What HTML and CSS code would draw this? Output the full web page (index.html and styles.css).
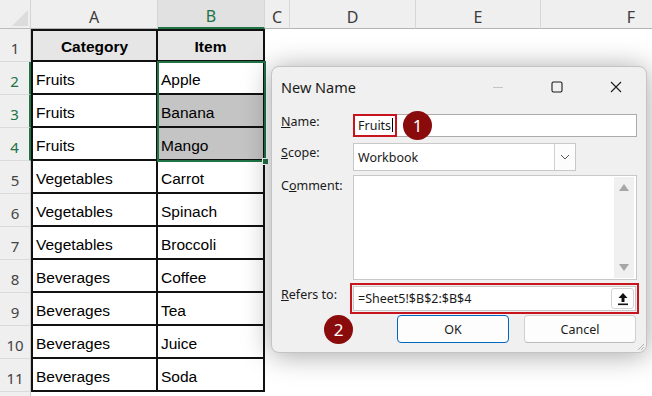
FILE: index.html
```html
<!DOCTYPE html>
<html lang="en">
  <head>
    <meta charset="utf-8">
    <title>New Name</title>
    <link rel="stylesheet" href="styles.css">
  </head>
  <body>
    <div class="sheet">
      <div class="corner"><span class="tri"></span></div>
      <div class="colhead">A</div>
      <div class="colhead on">B</div>
      <div class="colhead">C</div>
      <div class="colhead">D</div>
      <div class="colhead">E</div>
      <div class="colhead last">F</div>

      <div class="rowhead">1</div>
      <div class="cell head first">Category</div>
      <div class="cell head">Item</div>
      <div class="blank"></div>

      <div class="rowhead on">2</div>
      <div class="cell first">Fruits</div>
      <div class="cell">Apple</div>
      <div class="blank"></div>

      <div class="rowhead on">3</div>
      <div class="cell first">Fruits</div>
      <div class="cell sel">Banana</div>
      <div class="blank"></div>

      <div class="rowhead on">4</div>
      <div class="cell first">Fruits</div>
      <div class="cell sel">Mango</div>
      <div class="blank"></div>

      <div class="rowhead">5</div>
      <div class="cell first">Vegetables</div>
      <div class="cell">Carrot</div>
      <div class="blank"></div>

      <div class="rowhead">6</div>
      <div class="cell first">Vegetables</div>
      <div class="cell">Spinach</div>
      <div class="blank"></div>

      <div class="rowhead">7</div>
      <div class="cell first">Vegetables</div>
      <div class="cell">Broccoli</div>
      <div class="blank"></div>

      <div class="rowhead">8</div>
      <div class="cell first">Beverages</div>
      <div class="cell">Coffee</div>
      <div class="blank"></div>

      <div class="rowhead">9</div>
      <div class="cell first">Beverages</div>
      <div class="cell">Tea</div>
      <div class="blank"></div>

      <div class="rowhead">10</div>
      <div class="cell first">Beverages</div>
      <div class="cell">Juice</div>
      <div class="blank"></div>

      <div class="rowhead">11</div>
      <div class="cell first">Beverages</div>
      <div class="cell">Soda</div>
      <div class="blank"></div>

      <div class="rowhead"></div>
      <div class="blank tail"></div>

      <div class="selection"><span class="handle"></span></div>
    </div>

    <div class="dialog">
      <div class="titlebar">
        <span class="title">New Name</span>
        <span class="caption">
          <span class="capbtn">
            <svg width="12" height="12" viewBox="0 0 12 12"><path d="M1 6.5h10" stroke="#c4c4c4" stroke-width="1"/></svg>
          </span>
          <span class="capbtn">
            <svg width="12" height="12" viewBox="0 0 12 12"><rect x="1" y="1" width="10" height="10" rx="1.5" fill="none" stroke="#1a1a1a" stroke-width="1.1"/></svg>
          </span>
          <span class="capbtn">
            <svg width="12" height="12" viewBox="0 0 12 12"><path d="M1 1l10 10M11 1L1 11" stroke="#1a1a1a" stroke-width="1.1"/></svg>
          </span>
        </span>
      </div>

      <div class="form">
        <div class="row r-name">
          <label class="lbl"><u>N</u>ame:</label>
          <div class="field name"><span class="mark">Fruits</span></div>
        </div>
        <div class="row r-scope">
          <label class="lbl"><u>S</u>cope:</label>
          <div class="field scope">
            <span class="val">Workbook</span>
            <span class="drop">
              <svg width="10" height="6" viewBox="0 0 10 6"><path d="M1 1l4 4 4-4" fill="none" stroke="#555" stroke-width="1"/></svg>
            </span>
          </div>
        </div>
        <div class="row r-comment">
          <label class="lbl">C<u>o</u>mment:</label>
          <div class="field comment">
            <div class="scroll">
              <svg width="10" height="7" viewBox="0 0 10 7"><path d="M0 7L5 0l5 7z" fill="#a6a6a6"/></svg>
              <svg width="10" height="7" viewBox="0 0 10 7"><path d="M0 0l5 7 5-7z" fill="#a6a6a6"/></svg>
            </div>
          </div>
        </div>
        <div class="row r-refers">
          <label class="lbl"><u>R</u>efers to:</label>
          <div class="field refers">
            <span class="val">=Sheet5!$B$2:$B$4</span>
            <span class="pick">
              <svg width="12" height="14" viewBox="0 0 12 14"><path d="M6 1L1.5 6H4.5V10H7.5V6H10.5z" fill="#111"/><rect x="1" y="11.5" width="10" height="1.6" fill="#111"/></svg>
            </span>
          </div>
        </div>
        <div class="row r-buttons">
          <button class="btn primary">OK</button>
          <button class="btn">Cancel</button>
        </div>
      </div>

      <svg class="grip" width="10" height="10" viewBox="0 0 10 10"><path d="M9 3L3 9M9 6L6 9" stroke="#b0b0b0" stroke-width="1"/></svg>
    </div>

    <span class="badge b1">1</span>
    <span class="badge b2">2</span>
  </body>
</html>
```

FILE: styles.css
```css
html, body {
  margin: 0;
  padding: 0;
}

body {
  width: 652px;
  height: 396px;
  overflow: hidden;
  background: #fff;
  position: relative;
  font-family: "Liberation Sans", Arial, sans-serif;
}

/* spreadsheet */

.sheet {
  position: relative;
  display: grid;
  grid-template-columns: 31px 127px 107px 25px 126px 125px 111px;
  grid-template-rows: 29px repeat(11, 33px) 1fr;
  height: 396px;
}

.corner {
  background: #efefef;
  border-bottom: 1px solid #bdbdbd;
  border-right: 1px solid #d4d4d4;
  box-sizing: border-box;
  position: relative;
}

.corner .tri {
  position: absolute;
  right: 2px;
  bottom: 2px;
  width: 0;
  height: 0;
  border-left: 16px solid transparent;
  border-bottom: 16px solid #dcdcdc;
}

.colhead {
  background: #efefef;
  border-bottom: 1px solid #b4b4b4;
  border-right: 1px solid #d6d6d6;
  box-sizing: border-box;
  display: flex;
  justify-content: center;
  align-items: center;
  padding-top: 5px;
  font-family: "Noto Sans", "Open Sans", sans-serif;
  font-size: 16px;
  color: #3c3c3c;
}

.colhead.on {
  background: #e1e1e1;
  color: #217346;
  border-bottom: 2px solid #217346;
}

.colhead.last {
  justify-content: flex-end;
  padding-right: 17px;
  border-right: none;
}

.rowhead {
  background: #efefef;
  border-bottom: 1px solid #dadada;
  border-right: 1px solid #c8c8c8;
  box-sizing: border-box;
  display: flex;
  justify-content: center;
  align-items: center;
  padding-top: 5px;
  font-family: "Noto Sans", "Open Sans", sans-serif;
  font-size: 15px;
  color: #444;
}

.rowhead.on {
  color: #217346;
  border-right: 2px solid #217346;
}

.cell {
  border-right: 2px solid #111;
  border-bottom: 2px solid #111;
  box-sizing: border-box;
  display: flex;
  align-items: center;
  padding: 5px 0 0 3px;
  font-size: 15.5px;
  color: #000;
}

.cell.first {
  border-left: 2px solid #111;
}

.cell.head {
  background: #e6e6e6;
  border-top: 2px solid #111;
  justify-content: center;
  font-weight: bold;
  padding-left: 0;
  padding-top: 3px;
}

.cell.sel {
  background: #c4c4c4;
}

.blank {
  grid-column: span 4;
  background: #fff;
}

.blank.tail {
  grid-column: span 6;
}

.selection {
  position: absolute;
  left: 157px;
  top: 61px;
  width: 109px;
  height: 101px;
  box-sizing: border-box;
  border: 2px solid #217346;
}

.selection .handle {
  position: absolute;
  right: -5px;
  bottom: -5px;
  width: 5px;
  height: 5px;
  background: #217346;
  border: 1px solid #fff;
}

/* dialog */

.dialog {
  position: absolute;
  left: 271px;
  top: 66px;
  width: 376px;
  height: 287px;
  box-sizing: border-box;
  background: #f0f0f0;
  border: 1px solid #c4c4c4;
  border-radius: 8px;
  box-shadow: 0 2px 28px rgba(0, 0, 0, 0.36);
  font-family: "Noto Sans", "Open Sans", sans-serif;
  font-size: 12.5px;
  color: #1a1a1a;
}

.titlebar {
  height: 39px;
  display: flex;
  align-items: center;
  justify-content: space-between;
  padding-left: 9px;
  padding-right: 1px;
}

.title {
  font-size: 14.5px;
  color: #1a1a1a;
}

.caption {
  display: flex;
  height: 100%;
}

.capbtn {
  width: 59px;
  display: flex;
  align-items: center;
  justify-content: center;
}

.form {
  display: flex;
  flex-direction: column;
  padding: 0 9px 0 9px;
}

.row {
  display: flex;
  align-items: flex-start;
}

.lbl {
  width: 72px;
  flex: none;
  line-height: 16px;
}

.field {
  box-sizing: border-box;
  background: #fff;
  border: 1px solid #c8c8c8;
  display: flex;
  align-items: center;
}

.r-name {
  margin-top: 8px;
}

.field.name {
  flex: 1;
  height: 23px;
  border-color: #ababab;
  position: relative;
}

.mark {
  height: 23px;
  margin: -1px 0 0 -1px;
  box-sizing: border-box;
  border: 2px solid #c8141c;
  padding: 0 2px 0 3px;
  display: flex;
  align-items: center;
  font-size: 12.5px;
}

.mark::after {
  content: "";
  width: 1px;
  height: 14px;
  background: #000;
  margin-left: 1px;
}

.r-scope {
  margin-top: 6px;
}

.r-scope .lbl {
  padding-top: 2px;
}

.field.scope {
  width: 223px;
  height: 28px;
  justify-content: space-between;
}

.val {
  padding-left: 4px;
  white-space: nowrap;
}

.drop {
  width: 20px;
  height: 100%;
  border-left: 1px solid #d0d0d0;
  display: flex;
  align-items: center;
  justify-content: center;
  background: #fcfcfc;
}

.r-comment {
  margin-top: 4px;
}

.r-comment .lbl {
  padding-top: 3px;
}

.field.comment {
  flex: 1;
  height: 105px;
  justify-content: flex-end;
  align-items: stretch;
  padding: 1px 2px 1px 0;
}

.scroll {
  width: 20px;
  background: #f0f0f0;
  display: flex;
  flex-direction: column;
  justify-content: space-between;
  align-items: center;
  padding: 7px 0;
}

.r-refers {
  margin-top: 6px;
}

.r-refers .lbl {
  padding-top: 1px;
}

.field.refers {
  width: 283px;
  height: 25px;
  justify-content: space-between;
  outline: 2px solid #c8141c;
  outline-offset: 1px;
}

.pick {
  width: 23px;
  height: 21px;
  margin-right: 1px;
  box-sizing: border-box;
  border: 1px solid #d4d4d4;
  border-radius: 3px;
  display: flex;
  align-items: center;
  justify-content: center;
}

.r-buttons {
  margin-top: 4px;
  justify-content: flex-end;
  gap: 15px;
  padding-right: 1px;
}

.btn {
  width: 112px;
  height: 28px;
  box-sizing: border-box;
  background: #fdfdfd;
  border: 1px solid #d0d0d0;
  border-bottom-color: #bcbcbc;
  border-radius: 4px;
  font-family: "Noto Sans", "Open Sans", sans-serif;
  font-size: 12.5px;
  color: #1a1a1a;
  padding: 0;
}

.btn.primary {
  border: 1px solid #0067c0;
}

.grip {
  position: absolute;
  right: 1px;
  bottom: 1px;
}

/* callout badges */

.badge {
  position: absolute;
  width: 29px;
  height: 29px;
  border-radius: 50%;
  background: #8a0b0b;
  color: #fff;
  font-family: "Noto Sans", "Open Sans", sans-serif;
  font-size: 17px;
  display: flex;
  align-items: center;
  justify-content: center;
}

.b1 {
  left: 403px;
  top: 111px;
}

.b2 {
  left: 324px;
  top: 315px;
}
```
